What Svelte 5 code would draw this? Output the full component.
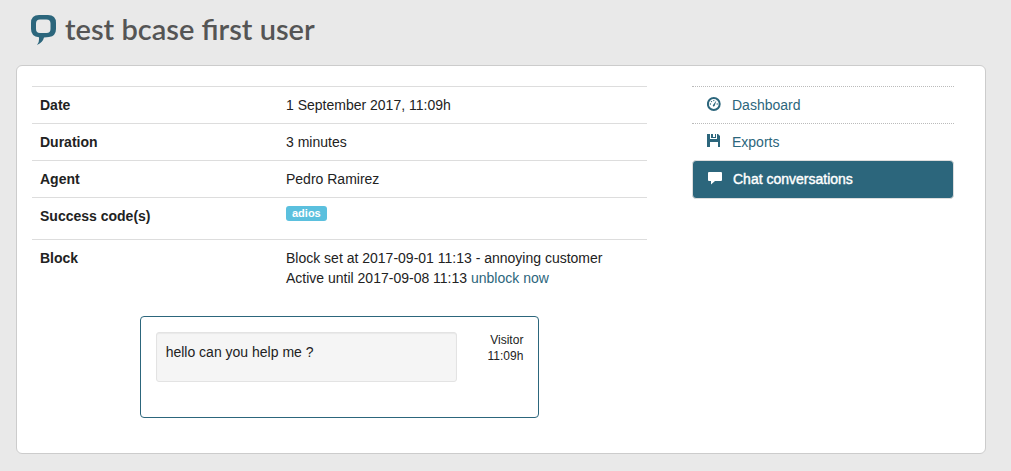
<script>
  const details = [
    { label: 'Date', value: '1 September 2017, 11:09h' },
    { label: 'Duration', value: '3 minutes' },
    { label: 'Agent', value: 'Pedro Ramirez' }
  ];
  const tags = ['adios'];
  const messages = [{ text: 'hello can you help me ?', author: 'Visitor', time: '11:09h' }];
  const links = [
    { label: 'Dashboard', icon: 'dashboard' },
    { label: 'Exports', icon: 'save' },
    { label: 'Chat conversations', icon: 'comment', active: true }
  ];
</script>

<header>
  <svg class="logo" viewBox="0 0 25 30" aria-hidden="true">
    <path
      fill="#2c667c"
      fill-rule="evenodd"
      d="M8 0H17Q25 0 25 8V14Q25 21 18 22L13 22.500Q12 27 6 30Q8.500 27 8 22.300Q0 21.500 0 14V8Q0 0 8 0ZM9 4.500Q5 4.500 5 8.500V14Q5 18 9 18H15.500Q19.500 18 19.500 14V8.500Q19.500 4.500 15.500 4.500Z"
    />
  </svg>
  <h1>test bcase first user</h1>
</header>

<div class="panel">
  <main>
    <table>
      <tbody>
        {#each details as row}
          <tr><th scope="row">{row.label}</th><td>{row.value}</td></tr>
        {/each}
        <tr class="tags">
          <th scope="row">Success code(s)</th>
          <td>{#each tags as tag}<span class="tag">{tag}</span>{/each}</td>
        </tr>
        <tr>
          <th scope="row">Block</th>
          <td>
            Block set at 2017-09-01 11:13 - annoying customer<br />
            Active until 2017-09-08 11:13 <a href="#unblock">unblock now</a>
          </td>
        </tr>
      </tbody>
    </table>

    <section class="chat">
      {#each messages as message}
        <div class="message">
          <p class="bubble">{message.text}</p>
          <div class="meta">{message.author}<br />{message.time}</div>
        </div>
      {/each}
    </section>
  </main>

  <nav>
    {#each links as link}
      <a href="#{link.icon}" class:active={link.active}>
        <svg viewBox="0 0 14 14" aria-hidden="true">
          {#if link.icon === 'dashboard'}
            <circle cx="6.800" cy="7" r="5.900" fill="none" stroke="currentColor" stroke-width="2" />
            <path d="M5.800 8.300L9.400 3.600L7.800 8.600Q7.100 9.900 6 9.300Z" fill="currentColor" />
            <g fill="currentColor">
              <circle cx="3.400" cy="7" r=".7" />
              <circle cx="4.500" cy="4.600" r=".7" />
              <circle cx="6.800" cy="3.600" r=".7" />
              <circle cx="10.200" cy="7" r=".7" />
            </g>
          {:else if link.icon === 'save'}
            <path
              fill="currentColor"
              fill-rule="evenodd"
              d="M0 0H3V5H10V0H11L13 2V13H11V8H3V13H0ZM4 0H9V4H4ZM6 0V3H8V0Z"
            />
          {:else}
            <path fill="currentColor" d="M1 1H13Q14 1 14 2V9Q14 10 13 10H7L3 13.500V10H1Q0 10 0 9V2Q0 1 1 1Z" />
          {/if}
        </svg>
        {link.label}
      </a>
    {/each}
  </nav>
</div>

<style>
  :global(body) {
    background: #e9e9e9;
    color: #222;
    font: 14px/20px "Liberation Sans", Arial, sans-serif;
  }

  a {
    color: #2c667c;
    text-decoration: none;
  }

  header {
    display: flex;
    align-items: flex-start;
    gap: 9px;
    padding: 15px 31px 0;
    height: 50px;
  }

  .logo {
    width: 25px;
    height: 30px;
  }

  h1 {
    margin: 0;
    color: #555;
    font: 600 29px/28px Lato, sans-serif;
  }

  .panel {
    display: grid;
    grid-template-columns: 615fr 262fr;
    align-items: start;
    gap: 45px;
    margin: 0 25px 0 16px;
    padding: 20px 31px 35px 15px;
    border: 1px solid #ccc;
    border-radius: 6px;
    background: #fff;
  }

  table {
    width: 100%;
    border-collapse: collapse;
    table-layout: fixed;
  }

  th,
  td {
    padding: 8px;
    border-top: 1px solid #ddd;
    text-align: left;
    vertical-align: top;
  }

  th {
    width: 40%;
    box-sizing: border-box;
  }

  .tags td {
    padding: 7px 8px 18px;
    line-height: 15px;
  }

  .tag {
    display: inline-block;
    padding: 0 6px;
    border-radius: 3px;
    background: #5bc0de;
    color: #fff;
    font-size: 11px;
    font-weight: bold;
    line-height: 15px;
  }

  .chat {
    box-sizing: border-box;
    width: 65%;
    min-height: 102px;
    margin: 20px auto 0;
    padding: 15px;
    border: 1px solid #2c667c;
    border-radius: 4px;
  }

  .message {
    display: flex;
    justify-content: space-between;
  }

  .bubble {
    box-sizing: border-box;
    width: 82%;
    min-height: 50px;
    margin: 0;
    padding: 9px;
    border: 1px solid #e3e3e3;
    border-radius: 3px;
    background: #f5f5f5;
    box-shadow: inset 0 1px 1px rgba(0, 0, 0, 0.05);
  }

  .meta {
    font-size: 12px;
    line-height: 16px;
    text-align: right;
  }

  nav a {
    display: flex;
    align-items: flex-start;
    gap: 11px;
    padding: 8px 15px;
    border-top: 1px dotted #bbb;
  }

  nav svg {
    width: 14px;
    height: 14px;
    margin-top: 2px;
  }

  nav .active {
    padding-bottom: 9px;
    border: 1px solid #ddd;
    border-radius: 4px;
    background: #2c667c;
    color: #fff;
    -webkit-text-stroke: 0.4px #fff;
  }
</style>
